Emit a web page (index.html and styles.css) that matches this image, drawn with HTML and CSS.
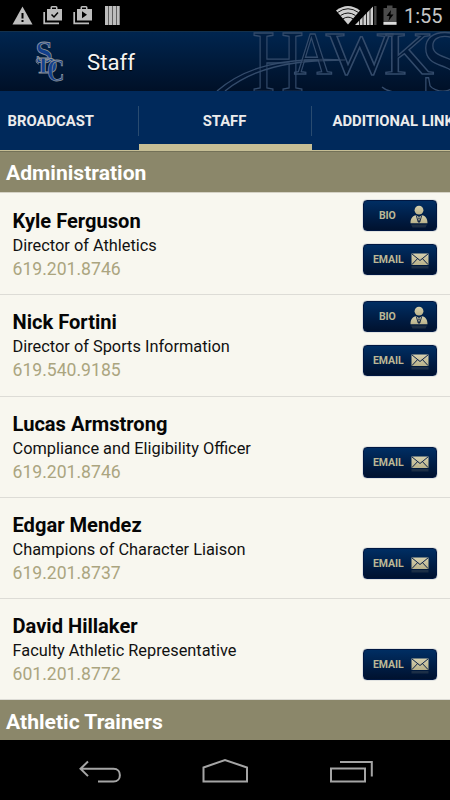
FILE: index.html
```html
<!DOCTYPE html>
<html lang="en">
<head>
<meta charset="utf-8">
<title>Staff</title>
<link rel="stylesheet" href="styles.css">
</head>
<body>
<svg class="defs" aria-hidden="true">
  <defs>
    <linearGradient id="gold" x1="0" y1="0" x2="0" y2="1"><stop offset="0" stop-color="#d6d0ae"/><stop offset="1" stop-color="#b9b28a"/></linearGradient>
    <symbol id="person" viewBox="0 0 18 24">
      <circle cx="9" cy="5.2" r="4.4" fill="url(#gold)"/>
      <path d="M.5 18.3C.5 13.5 2.5 10.8 6 10.3L9 12l3-1.7c3.500.5 5.500 3.200 5.500 8z" fill="url(#gold)"/>
      <path d="M6.300 10.500L8.200 17M11.700 10.500L9.800 17" stroke="#061a3e" stroke-width=".9" fill="none"/>
      <path d="M9 12l-.8 1.200.6 1L8 17l1 1 1-1-.8-2.800.6-1z" fill="#061a3e"/>
      <path d="M1 19.500h16l-1.500 3h-13z" fill="#b9b28a" opacity=".16"/>
    </symbol>
    <symbol id="mail" viewBox="0 0 18 17">
      <rect x=".5" y=".5" width="17" height="11.500" fill="url(#gold)"/>
      <path d="M.8.8L9 7.500 17.200.8M.8 11.700L6.500 5.700M17.200 11.700L11.500 5.700" fill="none" stroke="#0b2148" stroke-width="1"/>
      <path d="M.5 13h17v2.500h-17z" fill="#b9b28a" opacity=".15"/>
    </symbol>
  </defs>
</svg>
<div class="status">
  <svg class="notices" width="120" height="31" viewBox="0 0 120 31" fill="#bdbdbd">
    <path d="M22.500 6.500L32.500 24.500h-20z"/>
    <path d="M21.500 13h2v5.500h-2zM21.500 20h2v2h-2z" fill="#000"/>
    <path d="M47 9h3.500V7.500q0-1.500 1.500-1.500h4q1.500 0 1.500 1.500V9H62v11.500H47zM52 7.500V9h4V7.500z" fill-rule="evenodd"/>
    <path d="M44.200 12v11.300H59" fill="none" stroke="#bdbdbd" stroke-width="1.700"/>
    <path d="M51.500 14.500l2.500 2.500 4-4.500" fill="none" stroke="#000" stroke-width="1.500"/>
    <path d="M77 9h3.500V7.500q0-1.500 1.500-1.500h4q1.500 0 1.500 1.500V9H92v11.500H77zM82 7.500V9h4V7.500z" fill-rule="evenodd"/>
    <path d="M74.200 12v11.300H89" fill="none" stroke="#bdbdbd" stroke-width="1.700"/>
    <path d="M82 11.200v7l5-3.500z" fill="#000"/>
    <path d="M105 6h14.700v19H105z"/>
    <path d="M108.500 6v19M112.500 6v19M116.500 6v19" stroke="#555" stroke-width=".9"/>
  </svg>
  <svg class="signals" width="64" height="31" viewBox="336 0 64 31">
    <path d="M336 10.500Q348 1.500 360 10.500L348 24.500z" fill="#cfcfcf"/>
    <g fill="none" stroke="#000" stroke-width=".9"><path d="M337.500 12.500Q348 5 358.500 12.500M340.500 15.500Q348 10.500 355.500 15.500M343 18.800Q348 15.500 353 18.800"/></g>
    <path d="M355 25L373 6.500V25z" fill="#cfcfcf"/>
    <path d="M374 6h2.500v19H374z" fill="#444"/>
    <path d="M359.500 20v5M363 16v9M366.500 12v13M370 9v16M373.700 6v19" stroke="#000" stroke-width=".8"/>
    <path d="M383.500 8h3.500V5.500h5.500V8h4v17h-13z" fill="#4b4b4b"/>
    <path d="M391 10l-4.500 6h3l-1 5 5-6.500h-3z" fill="#000"/>
    <path d="M383.500 22h13v2.700h-13z" fill="#ddd"/>
  </svg>
  <span class="clock">1:55</span>
</div>
<header class="bar">
  <svg class="crest" width="34" height="48" viewBox="32 37 34 48" aria-label="SDC">
    <g font-family="Liberation Serif, serif" font-weight="700" fill="#123f8c" stroke="#8f9499" stroke-width=".8">
      <text x="35.500" y="62" font-size="31" textLength="17" lengthAdjust="spacingAndGlyphs">S</text>
      <text x="38.500" y="71.500" font-size="24" textLength="19" lengthAdjust="spacingAndGlyphs">D</text>
      <text x="47" y="80.300" font-size="31" textLength="17.500" lengthAdjust="spacingAndGlyphs">C</text>
      <path d="M40 57c-5-1-5 6-1 6" fill="none"/>
    </g>
  </svg>
  <h1>Staff</h1>
  <svg class="wordmark" width="240" height="60" viewBox="210 31 240 60" aria-label="HAWKS">
    <g font-family="Liberation Serif, serif" fill="#03142e" fill-opacity=".35" stroke="#334b6b" stroke-width="1.400">
      <text x="252" y="90.500" font-size="88" textLength="52" lengthAdjust="spacingAndGlyphs">H</text>
      <path d="M217 91C245 67 282 57 345 60C288 60 252 69 225 91" fill="#061b3a"/>
      <text x="294" y="73.500" font-size="62" textLength="38" lengthAdjust="spacingAndGlyphs">A</text>
      <text x="326" y="73.500" font-size="62" textLength="67" lengthAdjust="spacingAndGlyphs">W</text>
      <text x="384" y="73.500" font-size="62" textLength="50" lengthAdjust="spacingAndGlyphs">K</text>
      <text x="420" y="94" font-size="94" textLength="48" lengthAdjust="spacingAndGlyphs">S</text>
      <path d="M382 87q6 5 14 5" fill="none"/>
    </g>
  </svg>
</header>
<nav class="tabs">
  <a class="tab first">BROADCAST</a>
  <a class="tab active">STAFF</a>
  <a class="tab last">ADDITIONAL LINKS</a>
</nav>
<main>
  <h2>Administration</h2>
  <section class="person"><div class="info"><h3>Kyle Ferguson</h3><p>Director of Athletics</p><p class="phone">619.201.8746</p></div><div class="actions"><button class="bio">BIO<svg width="18" height="24"><use href="#person"/></svg></button><button>EMAIL<svg width="18" height="17"><use href="#mail"/></svg></button></div></section>
  <section class="person"><div class="info"><h3>Nick Fortini</h3><p>Director of Sports Information</p><p class="phone">619.540.9185</p></div><div class="actions"><button class="bio">BIO<svg width="18" height="24"><use href="#person"/></svg></button><button>EMAIL<svg width="18" height="17"><use href="#mail"/></svg></button></div></section>
  <section class="person"><div class="info"><h3>Lucas Armstrong</h3><p>Compliance and Eligibility Officer</p><p class="phone">619.201.8746</p></div><div class="actions"><button>EMAIL<svg width="18" height="17"><use href="#mail"/></svg></button></div></section>
  <section class="person"><div class="info"><h3>Edgar Mendez</h3><p>Champions of Character Liaison</p><p class="phone">619.201.8737</p></div><div class="actions"><button>EMAIL<svg width="18" height="17"><use href="#mail"/></svg></button></div></section>
  <section class="person"><div class="info"><h3>David Hillaker</h3><p>Faculty Athletic Representative</p><p class="phone">601.201.8772</p></div><div class="actions"><button>EMAIL<svg width="18" height="17"><use href="#mail"/></svg></button></div></section>
  <h2 class="next">Athletic Trainers</h2>
</main>
<footer class="navbar">
  <svg width="450" height="60" viewBox="0 740 450 60" fill="none" stroke="#a5a5a5" stroke-width="2">
    <path d="M88 761.500l-7.500 7.300 7.500 7.300M81 768.800h32.500c8.500 0 8.500 12.700 0 12.700H98"/>
    <path d="M203.500 781.500v-14l21.500-7.500 22 7.500v14z"/>
    <path d="M331 768.500h34v13h-34zM340 762h31.800v14.500"/>
  </svg>
</footer>
</body>
</html>
```
FILE: styles.css
```css
* { box-sizing: border-box; }
body { margin: 0; width: 450px; height: 800px; overflow: hidden; background: #000; font-family: Roboto, sans-serif; display: flex; flex-direction: column; }
h1, h2, h3, p { margin: 0; }
.defs { position: absolute; width: 0; height: 0; }
.status { height: 31px; flex: none; display: flex; align-items: center; }
.signals { margin-left: auto; }
.clock { width: 50px; padding: 1px 0 0 4px; color: #c6c6c6; font-size: 20px; line-height: 31px; }
.bar { height: 60px; flex: none; display: flex; align-items: center; padding-left: 32px; background: linear-gradient(#00254f, #001027); border-top: 1px solid #12304c; }
.bar h1 { margin-left: 21px; font-size: 22.200px; font-weight: 400; color: #f4f4f4; line-height: 60px; text-shadow: 0 1px 1px #000; }
.wordmark { margin-left: auto; margin-top: -1px; }
.tabs { height: 60px; flex: none; display: flex; overflow: hidden; background: #00295b; }
.tab { flex: none; height: 60px; padding-top: 1px; border-bottom: 1px solid #c6be95; color: #ececec; font-size: 14.800px; font-weight: 700; line-height: 59px; text-align: center; white-space: nowrap; background: linear-gradient(#294b70, #294b70) right 15px / 1px 30px no-repeat; }
.first { width: 139px; padding-left: 7.500px; text-align: left; }
.active { width: 173px; padding-right: 2px; border-bottom: 7px solid #c6be95; }
.last { width: 173px; padding-left: 20.500px; text-align: left; background: none; }
main { height: 589px; flex: none; overflow: hidden; background: #f8f7ef; }
h2 { height: 42px; padding-left: 6px; background: #8b876a; border-top: 1px solid #737158; border-bottom: 1px solid #d5d2c5; color: #fff; font-size: 21.100px; font-weight: 700; line-height: 42px; }
.next { border-top-color: #8b876a; margin-top: 1px; }
.person { height: 101.250px; padding: 7px 13px 0 12.500px; display: flex; justify-content: space-between; position: relative; top: 1px; border-bottom: 1px solid #dddcd6; }
.info { padding-top: 8px; }
h3 { height: 24px; font-size: 20.100px; line-height: 24px; font-weight: 700; color: #060606; }
.info p { height: 24px; font-size: 16.350px; line-height: 26px; color: #111; white-space: nowrap; }
.info .phone { height: 23px; font-size: 17.600px; line-height: 24px; color: #aba57f; }
.actions { display: flex; flex-direction: column; justify-content: flex-end; gap: 13px; height: 75px; margin-top: -1px; }
button { width: 74px; height: 31px; margin: 0; padding: 0 7px 0 9px; display: flex; align-items: center; justify-content: space-between; border: 1px solid #001741; border-radius: 4px; background: linear-gradient(#002e63, #001c43 60%, #00122f); color: #bdb895; font: 700 10.500px Roboto, sans-serif; letter-spacing: -.1px; box-shadow: 0 0 1px #193563; }
button svg { margin-top: 4px; }
.bio { padding-left: 15px; padding-right: 8px; }
.bio svg { margin-top: 2px; }
.navbar { height: 60px; flex: none; }
.navbar svg { display: block; }
```
